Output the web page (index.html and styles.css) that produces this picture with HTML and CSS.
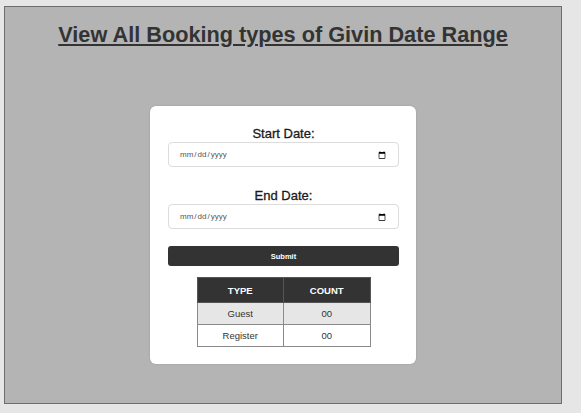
FILE: index.html
```html
<!DOCTYPE html>
<html lang="en">
<head>
<meta charset="utf-8">
<title>View All Booking types</title>
<link rel="stylesheet" href="styles.css">
</head>
<body>
<div class="frame">
  <h2 class="title">View All Booking types of Givin Date Range</h2>
  <form class="card">
    <label class="field-label" for="start">Start Date:</label>
    <input class="date-input" type="date" id="start">
    <label class="field-label second" for="end">End Date:</label>
    <input class="date-input" type="date" id="end">
    <button class="submit" type="button">Submit</button>
    <table class="result">
      <thead>
        <tr><th>TYPE</th><th>COUNT</th></tr>
      </thead>
      <tbody>
        <tr class="shade"><td>Guest</td><td>00</td></tr>
        <tr><td>Register</td><td>00</td></tr>
      </tbody>
    </table>
  </form>
</div>
</body>
</html>
```
FILE: styles.css
```css
html, body {
  margin: 0;
  padding: 0;
  background: #e6e6e6;
  font-family: "Liberation Sans", Arial, sans-serif;
}
body {
  padding: 6px 0 0 4px;
}
.frame {
  box-sizing: border-box;
  width: 558px;
  height: 398px;
  background: #b4b4b4;
  border: 1px solid #6e6e6e;
  display: flex;
  flex-direction: column;
  align-items: center;
}
.title {
  margin: 15px 0 0;
  font-size: 21.7px;
  line-height: 25px;
  font-weight: bold;
  color: #333;
  text-decoration: underline;
  text-underline-offset: 2px;
}
.card {
  box-sizing: border-box;
  width: 266px;
  margin-top: 59px;
  background: #fff;
  border-radius: 6px;
  padding: 20px 17px 17px 18px;
  display: flex;
  flex-direction: column;
  box-shadow: 0 0 2px rgba(0,0,0,0.15);
}
.field-label {
  display: block;
  text-align: center;
  font-size: 13px;
  font-weight: normal;
  -webkit-text-stroke: 0.3px #1a1a1a;
  color: #1a1a1a;
  line-height: 16px;
}
.field-label.second {
  margin-top: 21px;
}
.date-input {
  box-sizing: border-box;
  width: 100%;
  height: 25px;
  margin: 0;
  border: 1px solid #dcdcdc;
  border-radius: 4px;
  padding: 0 10px;
  font-family: "Liberation Sans", Arial, sans-serif;
  font-size: 8px;
  color: #555;
  background: #fff;
}
.submit {
  margin-top: 17px;
  height: 20px;
  width: 100%;
  border: none;
  border-radius: 3px;
  background: #333;
  color: #fff;
  font-family: "Liberation Sans", Arial, sans-serif;
  font-size: 7.5px;
  font-weight: bold;
  padding: 0;
}
.result {
  margin: 11px auto 0;
  width: 174px;
  border-collapse: collapse;
  font-size: 9.5px;
  color: #333;
}
.result th, .result td {
  border: 1px solid #8a8a8a;
  text-align: center;
  width: 50%;
  padding: 0;
}
.result th {
  height: 24px;
  background: #333;
  color: #fff;
  font-weight: bold;
  border-color: #555;
}
.result td {
  height: 21px;
}
.result tr.shade td {
  background: #e6e6e6;
}
```
